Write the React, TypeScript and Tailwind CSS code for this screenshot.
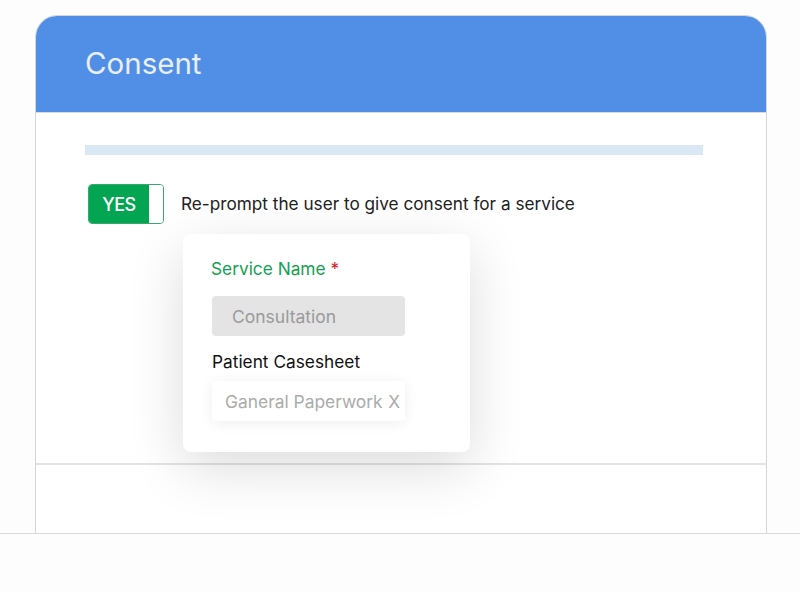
import React from 'react'

function Toggle() {
  return (
    <div className="flex h-[40px] w-[76px] overflow-hidden rounded-[4px] border border-[#3aa56e]">
      <div className="flex w-[60px] items-center justify-center bg-[#03a552] text-[18px] font-medium tracking-[-0.5px] text-white">
        YES
      </div>
      <div className="flex-1 bg-white" />
    </div>
  )
}

function ServicePopover() {
  return (
    <div className="ml-[98px] mt-[10px] w-[287px] rounded-[8px] bg-white px-[28px] pb-[31px] pt-[23px] shadow-[0_16px_56px_rgba(0,0,0,0.14)]">
      <p className="text-[17.3px] leading-[24px] text-[#12a150]">
        Service Name <span className="text-[#e0201f]">*</span>
      </p>
      <div className="ml-[1px] mt-[15px] flex h-[40px] w-[193px] items-center rounded-[4px] bg-[#e4e4e4] px-[20px] pt-[2px] text-[17.5px] text-[#9a9a9a]">
        Consultation
      </div>
      <p className="ml-[1px] mt-[14px] text-[17.3px] leading-[24px] text-[#111]">Patient Casesheet</p>
      <div className="ml-[1px] mt-[7px] flex h-[40px] w-[193px] items-center justify-between rounded-[4px] bg-white pl-[13px] pr-[5px] pt-[2px] text-[17.4px] text-[#ababab] shadow-[0_2px_14px_rgba(0,0,0,0.07)]">
        <span>Ganeral Paperwork</span>
        <span>X</span>
      </div>
    </div>
  )
}

export default function App() {
  return (
    <div className="h-[592px] w-[800px] bg-[#fdfdfd] font-['Inter','Liberation_Sans',sans-serif]">
      <div className="h-[534px] overflow-hidden border-b border-[#d9d9d9] pl-[35px] pr-[33px] pt-[15px]">
        <div className="h-[600px] rounded-t-[22px] border border-[#d6d6d6] bg-white">
          <div className="flex h-[97px] items-center rounded-t-[21px] border-b border-[#dcdcdc] bg-[#518fe7] pl-[49px] pb-[2px]">
            <h1 className="text-[29.5px] font-normal text-[#e9eff9]">Consent</h1>
          </div>
          <div className="h-[352px] border-b-2 border-[#e3e3e3] px-[49px] pt-[32px]">
            <div className="h-[10px] w-[618px] bg-[#dae7f4]" />
            <div className="ml-[3px] mt-[29px] flex items-center gap-[17px]">
              <Toggle />
              <span className="text-[17.2px] text-[#222]">Re-prompt the user to give consent for a service</span>
            </div>
            <ServicePopover />
          </div>
        </div>
      </div>
    </div>
  )
}
